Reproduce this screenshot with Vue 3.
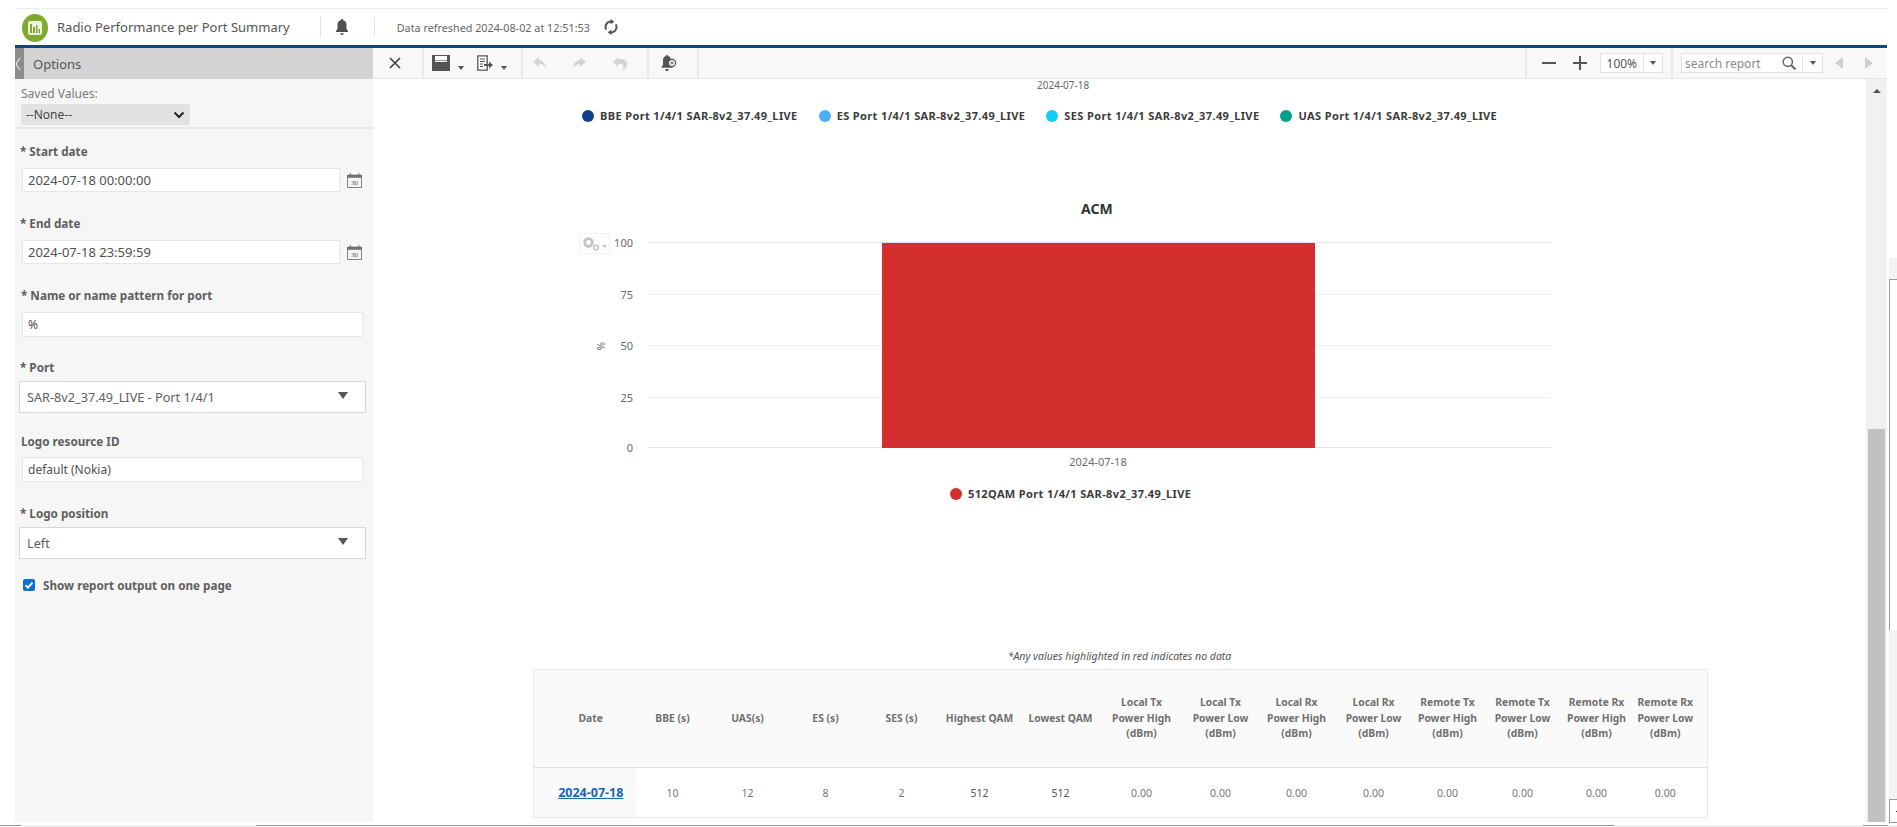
<script setup>
const legendTop = [
  { color: '#124191', label: 'BBE Port 1/4/1 SAR-8v2_37.49_LIVE' },
  { color: '#4caef5', label: 'ES Port 1/4/1 SAR-8v2_37.49_LIVE' },
  { color: '#14cdf7', label: 'SES Port 1/4/1 SAR-8v2_37.49_LIVE' },
  { color: '#00a08a', label: 'UAS Port 1/4/1 SAR-8v2_37.49_LIVE' },
]

const ticks = [
  { label: '100', y: 0 },
  { label: '75', y: 52 },
  { label: '50', y: 103 },
  { label: '25', y: 155 },
  { label: '0', y: 205 },
]

const columns = [
  { w: 102, lines: ['Date'] },
  { w: 74, lines: ['BBE (s)'] },
  { w: 76, lines: ['UAS(s)'] },
  { w: 80, lines: ['ES (s)'] },
  { w: 72, lines: ['SES (s)'] },
  { w: 84, lines: ['Highest QAM'] },
  { w: 78, lines: ['Lowest QAM'] },
  { w: 84, lines: ['Local Tx', 'Power High', '(dBm)'] },
  { w: 74, lines: ['Local Tx', 'Power Low', '(dBm)'] },
  { w: 78, lines: ['Local Rx', 'Power High', '(dBm)'] },
  { w: 76, lines: ['Local Rx', 'Power Low', '(dBm)'] },
  { w: 72, lines: ['Remote Tx', 'Power High', '(dBm)'] },
  { w: 78, lines: ['Remote Tx', 'Power Low', '(dBm)'] },
  { w: 70, lines: ['Remote Rx', 'Power High', '(dBm)'] },
  { w: 76, lines: ['Remote Rx', 'Power Low', '(dBm)'] },
]

const values = ['10', '12', '8', '2', '512', '512', '0.00', '0.00', '0.00', '0.00', '0.00', '0.00', '0.00', '0.00']
</script>

<template>
  <div class="page">
    <div class="frame">
      <div class="content">
        <header class="topbar">
          <svg class="logo" width="26" height="28" viewBox="0 0 26 28">
            <ellipse cx="13" cy="14" rx="13" ry="14" fill="#7cab2e" />
            <rect x="6" y="7" width="14" height="14" rx="2" fill="#eef3df" />
            <path d="M8 19V10h2v9zM11 19v-6h2v6zM14 19v-8h1.500v8zM16.500 19v-4H18v4z" fill="#7cab2e" />
          </svg>
          <span class="app-title">Radio Performance per Port Summary</span>
          <span class="top-sep first"></span>
          <svg class="top-bell" width="14" height="16" viewBox="0 0 14 16">
            <path d="M7 0a1.300 1.300 0 0 1 1.300 1.300c2.300.6 3.200 2.500 3.200 4.700v4l1.500 2v1H1v-1l1.500-2V6c0-2.200.9-4.100 3.200-4.700A1.300 1.300 0 0 1 7 0zM5 14.200h4A2 2 0 0 1 7 16a2 2 0 0 1-2-1.800z" fill="#4f4f4f" />
          </svg>
          <span class="top-sep second"></span>
          <span class="refreshed">Data refreshed 2024-08-02 at 12:51:53</span>
          <svg class="refresh" width="14" height="16" viewBox="0 0 14 16">
            <path d="M7 2.500a5.500 5.500 0 0 0-4.800 8.100" fill="none" stroke="#555" stroke-width="2" />
            <path d="M7 13.500a5.500 5.500 0 0 0 4.800-8.100" fill="none" stroke="#555" stroke-width="2" />
            <path d="M6.500 0l4 2.700-4 2.600zM7.500 16l-4-2.700 4-2.600z" fill="#555" />
          </svg>
        </header>

        <div class="workspace">
          <aside class="sidebar">
            <div class="options-head">
              <span class="collapse"><svg width="6" height="14" viewBox="0 0 6 14"><path d="M5 1L1 7l4 6" fill="none" stroke="#e8e8e8" stroke-width="1.200" /></svg></span>
              <span class="options-title">Options</span>
            </div>
            <div class="saved">
              <label class="saved-label">Saved Values:</label>
              <div class="saved-select">
                <span>--None--</span>
                <svg width="12" height="8" viewBox="0 0 12 8"><path d="M1.500 1.500L6 6l4.500-4.500" fill="none" stroke="#222" stroke-width="2" /></svg>
              </div>
            </div>
            <div class="form">
              <label class="field-label l-start">* Start date</label>
              <div class="date-row">
                <div class="input date">2024-07-18 00:00:00</div>
                <svg class="cal" width="15" height="15" viewBox="0 0 16 16">
                  <path d="M.5 2.500h15v13H.500z" fill="#f4f4f4" stroke="#777" />
                  <path d="M.5 2.500h15v2H.500zM3.500 0v3M12.500 0v3" fill="#777" stroke="#666" />
                  <text x="8" y="12.500" text-anchor="middle" class="cal-num">30</text>
                </svg>
              </div>
              <label class="field-label l-end">* End date</label>
              <div class="date-row">
                <div class="input date">2024-07-18 23:59:59</div>
                <svg class="cal" width="15" height="15" viewBox="0 0 16 16">
                  <path d="M.5 2.500h15v13H.500z" fill="#f4f4f4" stroke="#777" />
                  <path d="M.5 2.500h15v2H.500zM3.500 0v3M12.500 0v3" fill="#777" stroke="#666" />
                  <text x="8" y="12.500" text-anchor="middle" class="cal-num">30</text>
                </svg>
              </div>
              <label class="field-label l-name">* Name or name pattern for port</label>
              <div class="input wide">%</div>
              <label class="field-label l-port">* Port</label>
              <div class="dropdown">
                <span>SAR-8v2_37.49_LIVE - Port 1/4/1</span>
                <i class="tri"></i>
              </div>
              <label class="field-label l-logo">Logo resource ID</label>
              <div class="input wide">default (Nokia)</div>
              <label class="field-label l-pos">* Logo position</label>
              <div class="dropdown">
                <span>Left</span>
                <i class="tri"></i>
              </div>
              <div class="check-row">
                <span class="check">
                  <svg width="12" height="12" viewBox="0 0 12 12"><path d="M2.500 6.200l2.400 2.400 4.600-5" fill="none" stroke="#fff" stroke-width="2" /></svg>
                </span>
                <span class="field-label check-label">Show report output on one page</span>
              </div>
            </div>
          </aside>

          <main class="main">
            <div class="toolbar">
              <div class="tool-group">
                <button class="tool close-tool">
                  <svg width="14" height="14" viewBox="0 0 14 14"><path d="M2 2l10 10M12 2L2 12" stroke="#444" stroke-width="1.700" /></svg>
                </button>
                <span class="tool-sep"></span>
                <button class="tool save-tool">
                  <svg width="18" height="16" viewBox="0 0 18 16"><path d="M0 0h18v16H0z" fill="#555" /><path d="M3 1h12v6H3z" fill="#fff" /><path d="M3 5h12v1H3z" fill="#999" /></svg>
                  <i class="mini-tri"></i>
                </button>
                <button class="tool export-tool">
                  <svg width="16" height="16" viewBox="0 0 16 16"><path d="M.8.800h9.400v14.400H.800z" fill="#fff" stroke="#555" stroke-width="1.300" /><path d="M3 4h5M3 6.500h5M3 9h3M3 11.500h3" stroke="#555" /><path d="M7 9h5V6.500l4 3.500-4 3.500V11H7z" fill="#555" /></svg>
                  <i class="mini-tri"></i>
                </button>
                <span class="tool-sep"></span>
                <button class="tool undo">
                  <svg width="14" height="12" viewBox="0 0 14 12"><path d="M6 0L0 5l6 5V7c3 0 5 1 7 4-.5-5-3-7.500-7-8z" fill="#d4d4d4" /></svg>
                </button>
                <button class="tool redo">
                  <svg width="14" height="12" viewBox="0 0 14 12"><path d="M8 0l6 5-6 5V7c-3 0-5 1-7 4 .5-5 3-7.500 7-8z" fill="#d4d4d4" /></svg>
                </button>
                <button class="tool revert">
                  <svg width="14" height="14" viewBox="0 0 14 14"><path d="M5 1L0 6l5 5V8h2.500c2 0 3 1.200 3 3l-1 3c3-1 4.500-3 4.500-6 0-3-2.500-5-6-5H5z" fill="#d4d4d4" /></svg>
                </button>
                <span class="tool-sep"></span>
                <button class="tool bell-tool">
                  <svg width="16" height="16" viewBox="0 0 16 16"><path d="M6 0a1 1 0 0 1 1 1c2 .5 3 2 3 4v5l1.500 2v.800h-11V12L2 10V5c0-2 1-3.500 3-4a1 1 0 0 1 1-1zM4.500 14h3A1.500 1.500 0 0 1 6 16a1.500 1.500 0 0 1-1.500-2z" fill="#555" /><circle cx="11" cy="8" r="3.600" fill="#f6f6f6" stroke="#555" stroke-width="1.200" /><path d="M9.500 8h3M11 6.500v3" stroke="#555" /></svg>
                </button>
                <span class="tool-sep"></span>
              </div>
              <div class="tool-group right">
                <span class="tool-sep"></span>
                <svg class="zoom-icon minus" width="14" height="14" viewBox="0 0 14 14"><path d="M0 7h14" stroke="#555" stroke-width="2" /></svg>
                <svg class="zoom-icon plus" width="14" height="14" viewBox="0 0 14 14"><path d="M0 7h14M7 0v14" stroke="#555" stroke-width="2" /></svg>
                <div class="zoom-box">
                  <span class="zoom-val">100%</span>
                  <span class="zoom-drop"><i class="mini-tri"></i></span>
                </div>
                <span class="tool-sep after-zoom"></span>
                <div class="search-box">
                  <span class="search-text">search report</span>
                  <svg class="search-icon" width="14" height="14" viewBox="0 0 14 14"><circle cx="5.800" cy="5.800" r="4.600" fill="none" stroke="#666" stroke-width="1.500" /><path d="M9.200 9.200L13.500 13.500" stroke="#666" stroke-width="2" /></svg>
                  <span class="search-drop"><i class="mini-tri"></i></span>
                </div>
                <svg class="pager prev" width="9" height="12" viewBox="0 0 9 12"><path d="M8 0v12L0 6z" fill="#cfcfcf" /></svg>
                <svg class="pager next" width="9" height="12" viewBox="0 0 9 12"><path d="M1 0v12l8-6z" fill="#cfcfcf" /></svg>
              </div>
            </div>

            <div class="report-wrap">
              <div class="report">
                <div class="clip-date">2024-07-18</div>
                <div class="legend legend-top">
                  <span v-for="item in legendTop" :key="item.label" class="legend-item">
                    <i class="dot" :style="{ background: item.color }"></i>{{ item.label }}
                  </span>
                </div>
                <h3 class="chart-title">ACM</h3>
                <div class="chart">
                  <svg width="1100" height="240" viewBox="0 0 1100 240">
                    <g v-for="t in ticks" :key="t.label">
                      <line x1="139" x2="1042" :y1="t.y + 8.500" :y2="t.y + 8.500" :stroke="t.label === '0' || t.label === '100' ? '#e2e5f0' : '#f0f0f0'" />
                      <text x="124" :y="t.y + 13" text-anchor="end" class="tick">{{ t.label }}</text>
                    </g>
                    <rect x="373" y="9" width="433" height="205" fill="#d32f2f" />
                    <text x="589" y="232" text-anchor="middle" class="tick">2024-07-18</text>
                    <text x="0" y="0" transform="translate(96 112) rotate(-90)" text-anchor="middle" class="tick axis">%</text>
                  </svg>
                  <div class="chart-menu">
                    <svg width="26" height="16" viewBox="0 0 26 16">
                      <circle cx="6.500" cy="6.500" r="3.800" fill="none" stroke="#c4c4c4" stroke-width="2.800" />
                      <circle cx="14" cy="11.500" r="2.300" fill="none" stroke="#c4c4c4" stroke-width="1.600" />
                      <path d="M20 9h5l-2.500 3z" fill="#c4c4c4" />
                    </svg>
                  </div>
                </div>
                <div class="legend legend-bottom">
                  <span class="legend-item"><i class="dot" style="background: #d32f2f"></i>512QAM Port 1/4/1 SAR-8v2_37.49_LIVE</span>
                </div>
                <p class="note">*Any values highlighted in red indicates no data</p>
                <table class="data">
                  <colgroup>
                    <col v-for="(c, i) in columns" :key="i" :style="{ width: c.w + 'px' }" />
                  </colgroup>
                  <thead>
                    <tr>
                      <th v-for="(c, i) in columns" :key="i">
                        <div v-for="line in c.lines" :key="line">{{ line }}</div>
                      </th>
                    </tr>
                  </thead>
                  <tbody>
                    <tr>
                      <td class="date-cell"><a>2024-07-18</a></td>
                      <td v-for="(v, i) in values" :key="i" :class="{ qam: i === 4 || i === 5 }">{{ v }}</td>
                    </tr>
                  </tbody>
                </table>
              </div>
              <div class="scrollbar">
                <span class="scroll-up"></span>
                <div class="thumb"></div>
              </div>
            </div>
          </main>
        </div>
      </div>
      <div class="rail">
        <div class="rail-light upper"></div>
        <div class="rail-box"></div>
        <div class="rail-light lower"></div>
        <div class="rail-corner"><i></i></div>
      </div>
    </div>
    <div class="bottom-strip">
      <span class="seg dark s1"></span>
      <span class="seg light s2"></span>
      <span class="seg dark s3"></span>
      <span class="seg light s4"></span>
      <span class="seg dark s5"></span>
      <span class="seg light s6"></span>
    </div>
  </div>
</template>

<style>
html, body {
  margin: 0;
  background: #fff;
  overflow: hidden;
}
</style>

<style scoped>
.page {
  width: 1897px;
  height: 827px;
  box-sizing: border-box;
  padding-top: 8px;
  display: flex;
  flex-direction: column;
  overflow: hidden;
  font-family: "Noto Sans", "Open Sans", sans-serif;
  color: #4d4d4d;
}
.frame {
  height: 814px;
  flex: none;
  display: flex;
}
.content {
  width: 1872px;
  margin-left: 15px;
  flex: none;
  display: flex;
  flex-direction: column;
}
.rail {
  width: 8px;
  margin-left: 2px;
  flex: none;
  padding-top: 250px;
  box-sizing: border-box;
}
.rail-light { background: #f3f3f3; }
.rail-light.upper { height: 21px; }
.rail-light.lower { height: 169px; }
.rail-box {
  height: 351px;
  box-sizing: border-box;
  border-top: 1px solid #999;
  border-left: 1px solid #999;
}
.rail-corner {
  height: 24px;
  box-sizing: border-box;
  border: 1px solid #999;
  border-right: 0;
  display: flex;
  align-items: center;
  justify-content: flex-end;
}
.rail-corner i {
  width: 1px;
  height: 1px;
  background: #333;
}
.bottom-strip {
  height: 2px;
  margin-top: 3px;
  flex: none;
  display: flex;
}
.seg { height: 2px; box-sizing: border-box; }
.seg.dark { border-top: 1px solid #999; background: #fff; }
.seg.light { background: #f0f0f0; }
.s1 { width: 21px; }
.s2 { width: 235px; }
.s3 { width: 1358px; }
.s4 { width: 249px; }
.s5 { width: 25px; }
.s6 { flex: 1; }

.topbar {
  height: 36px;
  flex: none;
  border-top: 1px solid #ececec;
  border-bottom: 3px solid #124191;
  display: flex;
  align-items: center;
  padding-left: 7px;
}
.logo { flex: none; margin-top: 1px; }
.app-title {
  margin-left: 9px;
  font-size: 13px;
  color: #555;
}
.top-sep {
  width: 1px;
  height: 20px;
  background: #e4e4e4;
}
.top-sep.first { margin-left: 30px; }
.top-sep.second { margin-left: 25px; }
.top-bell { margin-left: 14px; }
.refreshed {
  margin-left: 22px;
  font-size: 10.800px;
  color: #666;
}
.refresh { margin-left: 14px; }

.workspace {
  flex: 1;
  min-height: 0;
  display: flex;
}
.sidebar {
  width: 358px;
  flex: none;
  background: #f6f6f6;
  display: flex;
  flex-direction: column;
}
.options-head {
  height: 31px;
  background: #d3d3d3;
  display: flex;
  align-items: center;
  flex: none;
}
.collapse {
  width: 9px;
  height: 100%;
  background: #8c8c8c;
  display: flex;
  align-items: center;
}
.options-title {
  margin-left: 9px;
  font-size: 13px;
  color: #555;
}
.saved {
  height: 50px;
  flex: none;
  padding: 7px 0 0 6px;
  box-sizing: border-box;
  border-bottom: 2px solid #e8e8e8;
}
.saved-label {
  display: block;
  font-size: 12px;
  color: #7a7a7a;
  line-height: 16px;
}
.saved-select {
  width: 169px;
  height: 21px;
  margin-top: 2px;
  padding: 0 5px;
  box-sizing: border-box;
  background: #e2e2e2;
  border-radius: 2px;
  display: flex;
  align-items: center;
  justify-content: space-between;
  font-size: 12px;
  color: #444;
}
.form {
  padding-left: 4px;
  display: flex;
  flex-direction: column;
  align-items: flex-start;
}
.field-label {
  font-size: 11.700px;
  font-weight: 700;
  color: #606060;
  line-height: 16px;
}
.l-start { margin: 14px 0 9px 1px; }
.l-end { margin: 23px 0 9px 1px; }
.l-name { margin: 23px 0 9px 2px; }
.l-port { margin: 22px 0 6px 1px; }
.l-logo { margin: 20px 0 8px 2px; }
.l-pos { margin: 23px 0 6px 1px; }
.date-row {
  display: flex;
  align-items: center;
}
.input {
  height: 25px;
  box-sizing: border-box;
  background: #fff;
  border: 1px solid #e6e6e6;
  display: flex;
  align-items: center;
  padding-left: 5px;
  font-size: 12px;
  color: #505050;
  margin-left: 3px;
}
.input.date { width: 318px; height: 24px; font-size: 13px; }
.input.wide { width: 341px; }
.cal { margin-left: 7px; }
.cal-num {
  font-size: 7px;
  font-family: "Liberation Serif", serif;
  fill: #555;
}
.dropdown {
  width: 347px;
  height: 32px;
  box-sizing: border-box;
  background: #fff;
  border: 1px solid #d8d8d8;
  display: flex;
  align-items: center;
  justify-content: space-between;
  padding: 0 17px 0 7px;
  font-size: 12.700px;
  color: #606060;
}
.tri {
  width: 0;
  height: 0;
  border-left: 5px solid transparent;
  border-right: 5px solid transparent;
  border-top: 7px solid #555;
  margin-bottom: 3px;
}
.check-row {
  display: flex;
  align-items: center;
  margin: 18px 0 0 4px;
}
.check {
  width: 12px;
  height: 12px;
  background: #0f6fd8;
  border-radius: 2px;
  display: flex;
  margin-right: 8px;
}

.main {
  flex: 1;
  min-width: 0;
  display: flex;
  flex-direction: column;
}
.toolbar {
  height: 31px;
  flex: none;
  background: #f8f8f8;
  border-bottom: 1px solid #e6e6e6;
  box-sizing: border-box;
  display: flex;
  justify-content: space-between;
  align-items: stretch;
}
.tool-group {
  display: flex;
  align-items: center;
}
.tool {
  border: 0;
  background: none;
  padding: 0;
  display: flex;
  align-items: center;
  height: 100%;
}
.tool-sep {
  width: 2px;
  height: 100%;
  background: #e9e9e9;
}
.close-tool { margin-left: 15px; margin-right: 20px; }
.save-tool { margin-left: 8px; }
.save-tool .mini-tri { margin-left: 8px; }
.export-tool { margin-left: 13px; margin-right: 14px; }
.export-tool .mini-tri { margin-left: 8px; }
.undo { margin-left: 10px; margin-right: 12px; }
.redo { margin-left: 13px; margin-right: 13px; }
.revert { margin-left: 14px; margin-right: 20px; }
.bell-tool { margin-left: 12px; margin-right: 20px; }
.mini-tri {
  width: 0;
  height: 0;
  border-left: 3px solid transparent;
  border-right: 3px solid transparent;
  border-top: 4px solid #555;
  margin-top: 10px;
  display: block;
}
.zoom-icon.minus { margin-left: 15px; }
.zoom-icon.plus { margin-left: 17px; }
.zoom-box {
  width: 63px;
  height: 20px;
  margin-left: 13px;
  box-sizing: border-box;
  background: #fff;
  border: 1px solid #e2e2e2;
  display: flex;
  align-items: center;
  font-size: 12px;
  color: #555;
}
.zoom-val { width: 43px; text-align: center; }
.zoom-drop, .search-drop {
  align-self: stretch;
  width: 19px;
  border-left: 1px solid #e2e2e2;
  display: flex;
  align-items: center;
  justify-content: center;
}
.zoom-drop .mini-tri, .search-drop .mini-tri { margin: 0; }
.after-zoom { margin-left: 8px; }
.search-box {
  width: 142px;
  height: 20px;
  margin-left: 8px;
  box-sizing: border-box;
  background: #fff;
  border: 1px solid #e2e2e2;
  display: flex;
  align-items: center;
  font-size: 12px;
  color: #8a8a8a;
}
.search-text { margin-left: 3px; flex: 1; }
.search-icon { margin-right: 6px; }
.pager.prev { margin-left: 12px; }
.pager.next { margin: 0 14px 0 20px; }

.report-wrap {
  flex: 1;
  min-height: 0;
  display: flex;
}
.report {
  flex: 1;
  min-width: 0;
  display: flex;
  flex-direction: column;
  align-items: flex-start;
  overflow: hidden;
  background: #fff;
}
.clip-date {
  font-size: 10px;
  color: #666;
  line-height: 12px;
  margin-left: 664px;
}
.legend {
  display: flex;
  font-size: 11px;
  letter-spacing: .38px;
  font-weight: 700;
  color: #3c3c3c;
}
.legend-top {
  gap: 21px;
  margin: 18px 0 0 209px;
}
.legend-item {
  display: inline-flex;
  align-items: center;
  line-height: 14px;
}
.dot {
  width: 12px;
  height: 12px;
  border-radius: 50%;
  margin-right: 6px;
}
.chart-title {
  margin: 77px 0 0 708px;
  font-size: 14px;
  font-weight: 700;
  line-height: 18px;
  color: #333;
}
.chart {
  position: relative;
  margin: 16px 0 0 136px;
  height: 240px;
  width: 1100px;
}
.chart svg { display: block; }
.tick {
  font-size: 11px;
  fill: #6b6b6b;
}
.axis { font-size: 10px; }
.chart-menu {
  position: absolute;
  left: 70px;
  top: -1px;
  width: 31px;
  height: 21px;
  box-sizing: border-box;
  border: 1px solid #f2f2f2;
  padding: 2px 0 0 2px;
}
.legend-bottom { margin: 13px 0 0 577px; }
.note {
  margin: 149px 0 0;
  align-self: center;
  font-size: 10.500px;
  font-style: italic;
  line-height: 12px;
  color: #555;
}
.data {
  margin: 7px 0 0 160px;
  width: 1174px;
  table-layout: fixed;
  border-collapse: collapse;
  border: 1px solid #e8e8e8;
  font-size: 10.500px;
}
.data th {
  height: 97px;
  padding: 0;
  background: #fafafa;
  border-bottom: 1px solid #e2e2e2;
  font-size: 10.300px;
  font-weight: 700;
  line-height: 15.800px;
  color: #707070;
  white-space: nowrap;
}
.data th:first-child { padding-left: 12px; }
.data th:last-child { padding-right: 8px; }
.data td {
  height: 49px;
  padding: 0;
  text-align: center;
  color: #777;
}
.data td:last-child { padding-right: 8px; }
.data td.qam { color: #555; }
.data td.date-cell {
  background: #fafafa;
  font-weight: 700;
  font-size: 12.500px;
  padding-left: 12px;
}
.date-cell a {
  color: #1565c0;
  text-decoration: underline;
}
.scrollbar {
  width: 21px;
  flex: none;
  background: #f1f1f1;
  display: flex;
  flex-direction: column;
  align-items: center;
  overflow: hidden;
}
.scroll-up {
  width: 0;
  height: 0;
  border-left: 4px solid transparent;
  border-right: 4px solid transparent;
  border-bottom: 4px solid #505050;
  margin-top: 10px;
  flex: none;
}
.thumb {
  width: 17px;
  margin-top: 336px;
  height: 393px;
  flex: none;
  background: #c1c1c1;
}
</style>
